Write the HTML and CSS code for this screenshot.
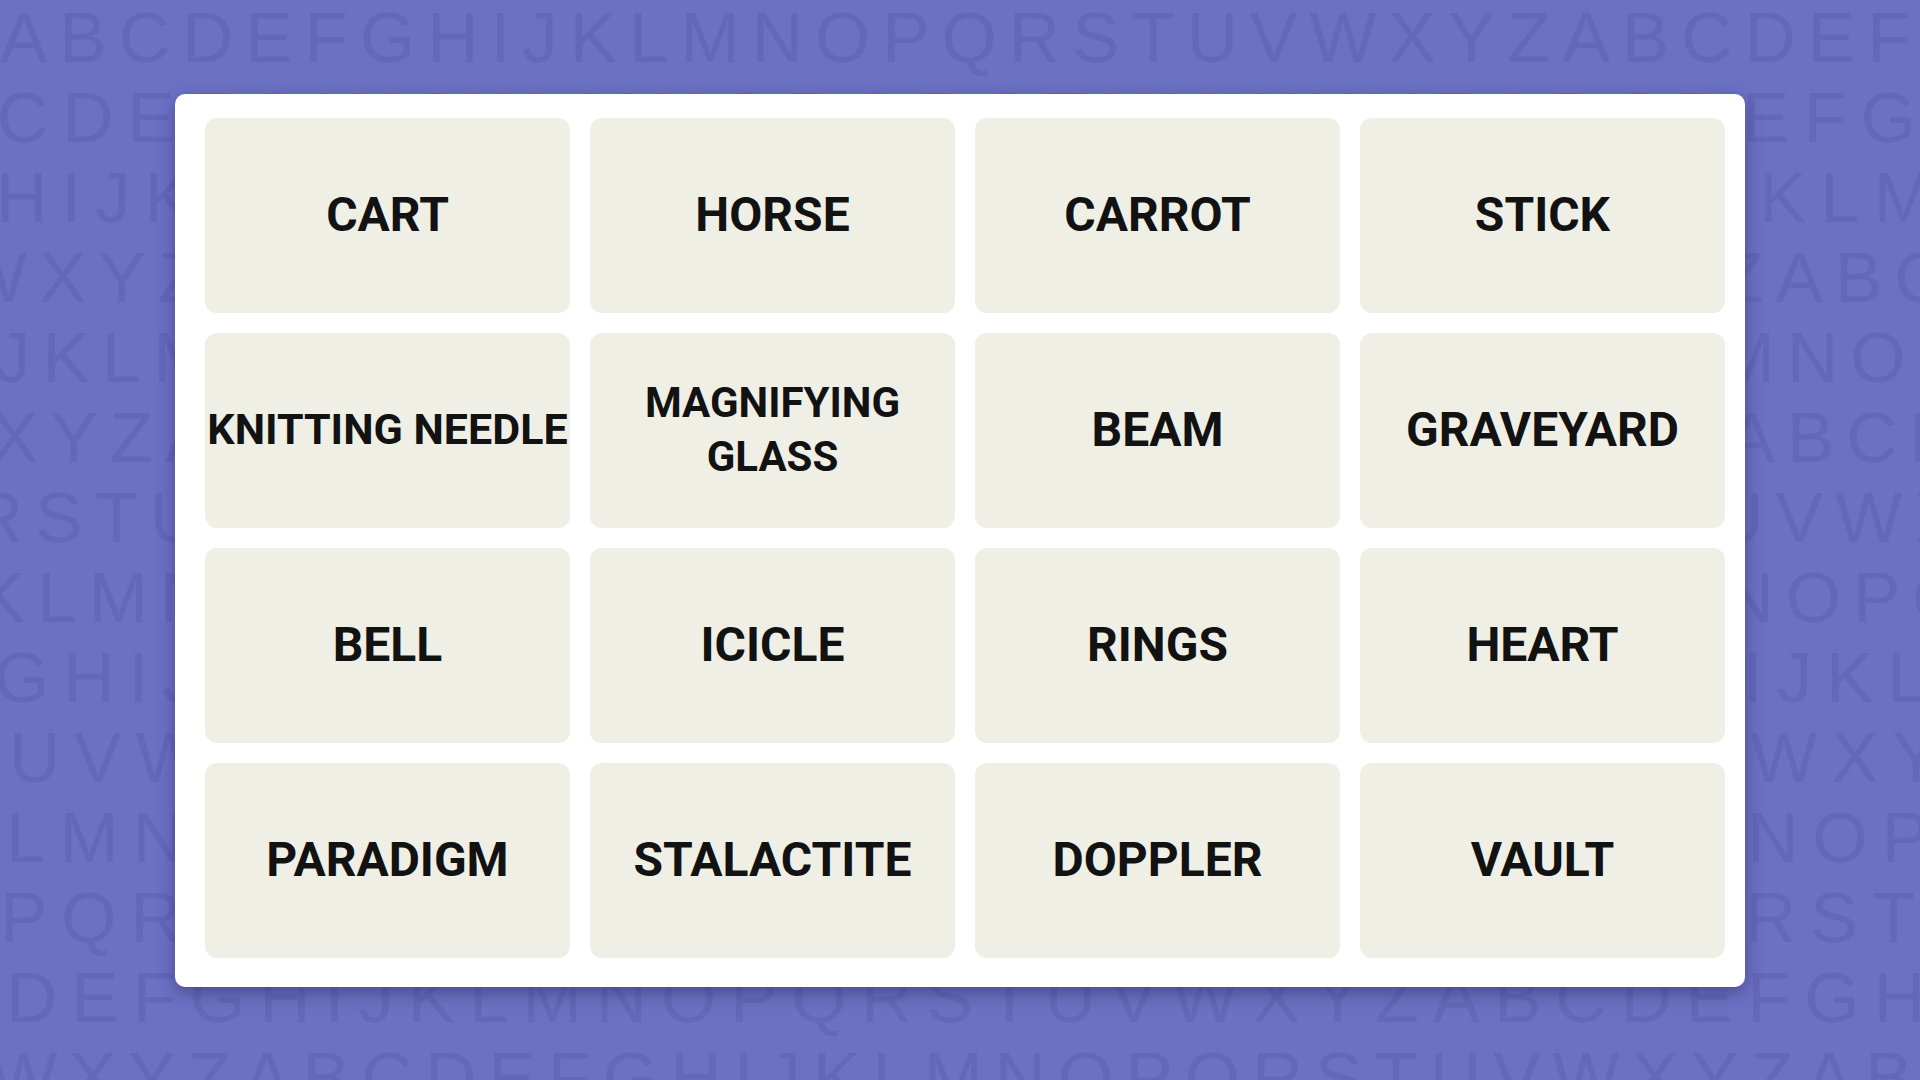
FILE: index.html
```html
<!DOCTYPE html>
<html lang="en">
<head>
  <meta charset="UTF-8" />
  <meta name="viewport" content="width=device-width, initial-scale=1.0"/>
  <title>Connections</title>
  <link rel="stylesheet" href="styles.css">
</head>
<body>
  <div class="scene">
    <div class="backdrop" aria-hidden="true">
      <div class="letters row-1">ABCDEFGHIJKLMNOPQRSTUVWXYZABCDEFGH</div>
      <div class="letters row-2">CDEFGHIJKLMNOPQRSTUVWXYZABCDEFGHIJ</div>
      <div class="letters row-3">HIJKLMNOPQRSTUVWXYZABCDEFGHIJKLMNO</div>
      <div class="letters row-4">WXYZABCDEFGHIJKLMNOPQRSTUVWXYZABCD</div>
      <div class="letters row-5">JKLMNOPQRSTUVWXYZABCDEFGHIJKLMNOPQ</div>
      <div class="letters row-6">XYZABCDEFGHIJKLMNOPQRSTUVWXYZABCDE</div>
      <div class="letters row-7">RSTUVWXYZABCDEFGHIJKLMNOPQRSTUVWXY</div>
      <div class="letters row-8">KLMNOPQRSTUVWXYZABCDEFGHIJKLMNOPQR</div>
      <div class="letters row-9">GHIJKLMNOPQRSTUVWXYZABCDEFGHIJKLMN</div>
      <div class="letters row-10">UVWXYZABCDEFGHIJKLMNOPQRSTUVWXYZAB</div>
      <div class="letters row-11">LMNOPQRSTUVWXYZABCDEFGHIJKLMNOPQRS</div>
      <div class="letters row-12">PQRSTUVWXYZABCDEFGHIJKLMNOPQRSTUVW</div>
      <div class="letters row-13">DEFGHIJKLMNOPQRSTUVWXYZABCDEFGHIJK</div>
      <div class="letters row-14">WXYZABCDEFGHIJKLMNOPQRSTUVWXYZABCD</div>
    </div>

    <main class="board">
      <div class="tile">CART</div>
      <div class="tile">HORSE</div>
      <div class="tile">CARROT</div>
      <div class="tile">STICK</div>

      <div class="tile tile-long">KNITTING NEEDLE</div>
      <div class="tile tile-wrap">MAGNIFYING GLASS</div>
      <div class="tile">BEAM</div>
      <div class="tile">GRAVEYARD</div>

      <div class="tile">BELL</div>
      <div class="tile">ICICLE</div>
      <div class="tile">RINGS</div>
      <div class="tile">HEART</div>

      <div class="tile">PARADIGM</div>
      <div class="tile">STALACTITE</div>
      <div class="tile">DOPPLER</div>
      <div class="tile">VAULT</div>
    </main>
  </div>
</body>
</html>
```

FILE: styles.css
```css
* {
  box-sizing: border-box;
  margin: 0;
  padding: 0;
}

body {
  background-color: #6c71c4;
  font-family: "Liberation Sans", Arial, sans-serif;
  overflow: hidden;
}

.scene {
  display: grid;
  width: 100vw;
  height: 100vh;
}

/* faint alphabet wallpaper behind the board */
.backdrop {
  grid-area: 1 / 1;
  overflow: hidden;
  margin-top: -2px;
}

.letters {
  font-size: 71px;
  line-height: 80px;
  letter-spacing: 12px;
  color: #6468ba;
  white-space: nowrap;
}

.row-1 { text-indent: 0; }
.row-2 { text-indent: -3px; letter-spacing: 14px; }
.row-3 { text-indent: -4px; letter-spacing: 14px; }
.row-4 { text-indent: -40px; }
.row-5 { text-indent: -5px; }
.row-6 { text-indent: -9px; }
.row-7 { text-indent: -28px; }
.row-8 { text-indent: -22px; }
.row-9 { text-indent: -6px; letter-spacing: 14px; }
.row-10 { text-indent: 9px; letter-spacing: 14px; }
.row-11 { text-indent: 6px; letter-spacing: 14px; }
.row-12 { text-indent: 0; letter-spacing: 14px; }
.row-13 { text-indent: 6px; letter-spacing: 14px; }
.row-14 { text-indent: -10px; }

.board {
  grid-area: 1 / 1;
  place-self: center;
  width: 1570px;
  display: grid;
  grid-template-columns: repeat(4, 365px);
  grid-auto-rows: 195px;
  gap: 20px;
  padding: 24px 20px 29px 30px;
  background-color: #fff;
  border-radius: 10px;
  box-shadow: 0 6px 18px rgba(30, 30, 80, 0.45);
}

.tile {
  display: flex;
  align-items: center;
  justify-content: center;
  text-align: center;
  background-color: #efefe6;
  border-radius: 12px;
  color: #121212;
  font-family: Roboto, "Liberation Sans", sans-serif;
  font-weight: 700;
  font-size: 48px;
  line-height: 1.2;
}

.tile-long {
  font-size: 43px;
  white-space: nowrap;
}

.tile-wrap {
  font-size: 42px;
  line-height: 54px;
}
```
